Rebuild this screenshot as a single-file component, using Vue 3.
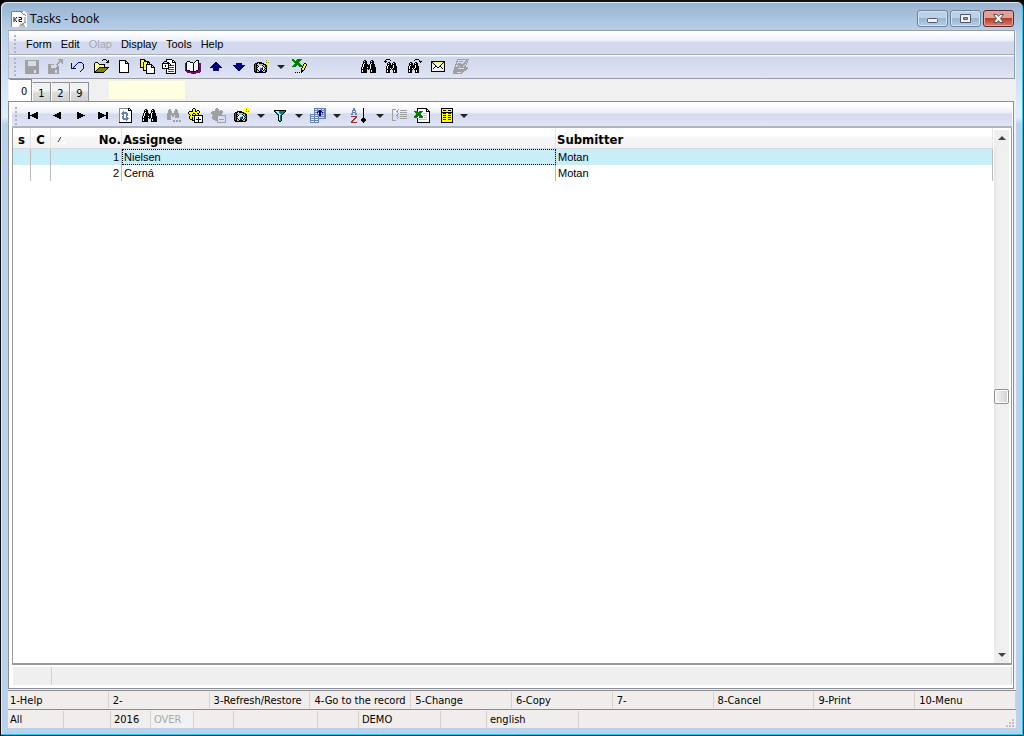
<script setup>
import { ref, h } from 'vue'

const palette = {
  K: '#000000', N: '#000080', G: '#a0a0a0', W: '#ffffff', Y: '#ffff00', O: '#808000',
  R: '#e00000', P: '#800080', T: '#008080', E: '#008000', L: '#c0c0c0', B: '#0000ff',
  C: '#a5e5e5', D: '#505050', S: '#6680b8', M: '#a03030', A: '#f7f77a', V: '#dbe4f4', F: '#7f947f'
}

const binoculars = [
  '', '...KK.....KK', '..KWKK...KWKK', '..KKKK...KKKK', '..KWKK...KWKK', '.KWKKKK.KWKKKK', '.KWKKKKKKWKKKK',
  '.KWKKKKKKWKKKK', 'KWKKKKWKKWKKKKK', 'KWKKKKKKKWKKKKK', 'KKKKKK.K.KKKKKK', 'KWKKKK...KWKKKK', 'KWKKKK...KWKKKK', 'KKKKKK...KKKKKK'
]
const icons = {
  save: ['', '.GGGGGGGGGGGGGG', '.GGG........GGG', '.GGG........GGG', '.GGG........GGG', '.GGG........GGG', '.GGG........GGG', '.GGGGGGGGGGGGGG',
    '.GGGGGGGGGGGGGG', '.GGGGGGGGGGGGGG', '.GGGGGGGGGGGGGG', '.GGGGGGGGG..GGG', '.GGGGGGGGG..GGG', '.GGGGGGGGG..GGG', '.GGGGGGGGGGGGGG'],
  export: ['...........GGGGG', '............GGGG', '............GGGG', '...........GG.GG', '..........GG...G', '.GGGGGG..GG', '.GGG......G', '.GGG......GG', '.GGG.....GGG', '.GGGGGGGGGGG',
    '.GGGGGGGGGGG', '.GGGGGGG..GG', '.GGGGGGG..GG', '.GGGGGGG..GG', '.GGGGGGGGGGG'],
  undo: ['', '', '', '........NNNN', '.N.....N....N', '.N....N......N', '.N...N.......N', '.N..N........N', '.N.N.........N', '.NNNNN.......N', '............N', '...........N', '..........N'],
  open: ['..........KKK', '.........K...K.K', '..............KK', '..KKK........KKK', '.KAWAK', '.KWAWAKKKKKK', '.KAWAWAWAWAK', '.KWAWAWAWAWK', '.KAWAWKKKKKKKKKK', '.KWAWKOOOOOOOOK', '.KAWKOOOOOOOOK', '.KWKOOOOOOOOK', '.KKOOOOOOOOK', '.KKKKKKKKKK'],
  page: ['', '...KKKKKKK', '...KWWWWWKK', '...KWWWWWKWK', '...KWWWWWKKKK', '...KWWWWWWWWK', '...KWWWWWWWWK', '...KWWWWWWWWK', '...KWWWWWWWWK', '...KWWWWWWWWK', '...KWWWWWWWWK', '...KWWWWWWWWK', '...KWWWWWWWWK', '...KKKKKKKKKK'],
  copy: ['.KKKKK', '.KAYAKK', '.KYAYKKKKK', '.KAYKAYAKKK', '.KYAKYAYKAK', '.KAYKAYKKKKKK', '.KYAKYAKWWWWKK', '.KAYKAYKWWWWKWK', '.KKKKYAKWWWWKKKK', '....KAYKWWWWWWWK', '....KYAKWWWWWWWK', '....KKKKWWWWWWWK', '.......KWWWWWWWK', '.......KWWWWWWWK', '.......KKKKKKKKK'],
  locked: ['....KKKKKK', '....KWWWWWKK', '..KKKWWWWWKWK', '.K...KKWWWKKKK', 'KKKKKKKKWWWWWK', 'KWWWWWKWKWWWWK', 'KWWKWWKRKRRRWK', 'KWWKWWKWWWWWWK', 'KWWWWWKRRRRRWK', 'KKKKKKKWWWWWWK', '....KWRRRRRRWK', '....KWWWWWWWWK', '....KWRRRRRRWK', '....KWWWWWWWWK', '....KKKKKKKKKK'],
  book: ['', '...........KKK', '..KKK.....KWWK', '.KWWWKKK.KWWWK', 'PKWAWWWWKWWWWKPP', 'PKWWAWWWKWAWWKPP', 'PKWAWWWWKWWAWKPP', 'PKWWAWWWKWAWWKPP', 'PKWAWWWWKWWAWKPP', 'PKWWAWWWKWAWWKPP', 'PKWWWWWWKWWWWKPP', 'PPKKKWWWKWWKKPPP', '.PPPPKKKKKKPPPPP', '..PPPPPPPPPPPPP', '......PPKPP'],
  up: ['', '', '', '.......NN', '......NNNN', '.....NNNNNN', '....NNNNNNNN', '...NNNNNNNNNN', '..NNNNNNNNNNNN', '.....NNNNNN', '.....NNNNNN', '.....NNNNNN'],
  down: ['', '', '', '', '.....NNNNNN', '.....NNNNNN', '..NNNNNNNNNNNN', '...NNNNNNNNNN', '....NNNNNNNN', '.....NNNNNN', '......NNNN', '.......NN'],
  camera: ['..........Y.Y.Y', '...........YOY', '.........YYYYYYY', '...KKKKK...YOYO', '.KKK.KKKKKYY.YY', 'KTKLLLLLLKKKY', 'KTKKLLLLKLLKK', 'KTKLKWWWWKLKK', 'KTKKWWCCTWKLK', 'KTKLWCTTNWLKK', 'KTKKWCTTNWKLK', 'KTKLKWNNWKLKK', 'KKKLLKKKKLLKK', '.KKKKKKKKKKK'],
  sheetPen: ['EE...EEEEE', 'EEE.EEEEE', '.EEEEEEE', '..EEEEE', '...EEEEE....KK', '..EEEEEEE..KYYK', '.EEEE.EEEE.KYYK', 'EEEE...EEEKYYK', '..........KYYK', '.........KYYK', '.........KYYK', '.........KKK', '.........KK', '...K.K.K.K'],
  binoculars,
  findBack: ['..KKKK', '.K....K', 'KKK', '.K..KK...KK', '...KWKK.KWKK', '...KKKK.KKKK', '...KWKKKKWKK', '..KWKKKKKWKKK', '..KWKKKKKWKKK', '..KWKKWKWKKKK', '..KKKKK.KKKKK', '..KWKK...KWKK', '..KWKK...KWKK', '..KKKK...KKKK'],
  findNext: ['........KKKK', '.......K....K', '............KKK', '...KK...KK...K', '..KWKK.KWKK', '..KKKK.KKKK', '..KWKKKKWKK', '.KWKKKKKWKKK', '.KWKKKKKWKKK', '.KWKKWKWKKKK', '.KKKKK.KKKKK', '.KWKK...KWKK', '.KWKK...KWKK', '.KKKK...KKKK'],
  mail: ['', '', '.KKKKKKKKKKKKKK', '.KKAAAAAAAAAAKK', '.KAKAWAWAWAWKAK', '.KWAKAWAWAWKAWK', '.KAWAKAWAWKAWAK', '.KWAWKKAWKKWAWK', '.KAWKAWKKAWKWAK', '.KWKWAWAWAWAKWK', '.KAWAWAWAWAWAWK', '.KWAWAWAWAWAWAK', '.KKKKKKKKKKKKKK'],
  edit: ['....GGGGGGGGGGGG', '....G........GG', '...GG.GGGG..GGG', '...G.......GG.G', '...G.GGG..GGGG', '..GGGGGGGGGG.G', '..G..GGGGGG.G', '..G.GG.GGG.GG', '.GGGGGGGGGGGGGG', '.GGGG......GGGG', '.GGGGGGGGGGGGG', 'GGGGGGGGGGGGG', 'GGGGGGGGGGG', 'GGGG....GG', 'GGGGGGGGG'],
  first: ['', '', '', '', '.KK......KK', '.KK....KKKK', '.KK..KKKKKK', '.KKKKKKKKKK', '.KK..KKKKKK', '.KK....KKKK', '.KK......KK'],
  prev: ['', '', '', '', '.........KK', '.......KKKK', '.....KKKKKK', '...KKKKKKKK', '.....KKKKKK', '.......KKKK', '.........KK'],
  next: ['', '', '', '', '....KK', '....KKKK', '....KKKKKK', '....KKKKKKKK', '....KKKKKK', '....KKKK', '....KK'],
  last: ['', '', '', '', '..KK......KK', '..KKKK....KK', '..KKKKKK..KK', '..KKKKKKKKKK', '..KKKKKK..KK', '..KKKK....KK', '..KK......KK'],
  refresh: ['FFFFFFFFFKK', 'FWWWWWWWWKWK', 'FWWWWWWWWKKKK', 'FWWWSWWWWWWWK', 'FWWSSSSSWWWWK', 'FWSSSSSSSWWWK', 'FWWSSWWSSWWWK', 'FWWWSWWSSWWWK', 'FWWSSWWSWWWWK', 'FWWSSWWSSWWWK', 'FWWSSSSSSSWWK', 'FWWWSSSSSWWWK', 'FWWWWWWSWWWWK', 'FWWWWWWWWWWWK', 'KKKKKKKKKKKKK'],
  findMore: ['', '....GG....GG', '...GGG....GGG', '...GGGG..GGGG', '...GGGG..GGGG', '..GGGGGGGGGGGG', '..GGGGGGGGGGGG', '..GGGG.GG.GGGG', '..GGGG.GG.GGGG', '..GGGG....GGGG', '..GGGG', '..GGGG..........', '........GG.GG.GG', '........GG.GG.GG'],
  addMark: ['.....KK', '....KYYK', '....KYYK.KK', '.KKKKYYKKYYK', 'KYYYYYYYYYYK', 'KYYYYKKYYKK', '.KYYKYYKYYK', '..KYKKKKKKKKKKK', '.KYYYYKWWWWWWWK', '.KYYKYKWWWKWWWK', '.KYYKYKWWWKWWWK', '..KKKYKWKKKKKWK', '....KKKWWWKWWWK', '......KWWWKWWWK', '......KKKKKKKKK'],
  removeMark: ['.....GG', '....GGGG', '....GGGG.GG', '.GGGGGGGGGGG', 'GGGGGGGGGGGG', 'GGGGGGGGGGG', '.GGGGGGGGGG', '..GGGGGGGGGGGGG', '.GGGGGG.......G', '.GGGGGG.......G', '.GGGGGG.......G', '..GGGGG.GGGGG.G', '....GGG.......G', '......G.......G', '......GGGGGGGGG'],
  filter: ['', '', '..KKKKKKKKKKKK', '..KTWCCTTTTTTK', '...KTWCTTTTTK', '....KTWCTTTK', '.....KTWCTK', '......KWTK', '......KWTK', '......KWTK', '......KWTK', '......KWTK', '......KTTK', '.......KK'],
  cards: ['....SSSSSSSSSSSS', '....SVVSVVVSVVSS', '....SSSSSNNSSSSS', '....SVVSNNNNVVSS', '....SSSNSNNSNSSS', '....SVVSVNNVSVSS', 'SSSSSSSSSNNSSSSS', 'SVVVSVVVSNNVVVSS', 'SSSSSSSSSSSSSSSS', 'SWWWSWWWSVVVVVSS', 'SSSSSSSSSSSSSSSS', 'SWWWSWWWS', 'SSSSSSSSS', 'SWWWSWWWS', 'SSSSSSSSS'],
  sort: ['...SS........K', '...SS........K', '..SSSS.......K', '..S..S.......K', '..SSSS.......K', '.SS..SS......K', '.SS..SS......K', '.............K', '.MMMMMM......K', '.....MM......K', '....MM......KKK', '...MM......KKKKK', '..MM.......KKKKK', '.MM.........KKK', '.MMMMMM......K'],
  tree: ['', '.GGGG..G', '.G....G..GGGGGGG', '.G...GG', '.G....G..GGGGGGG', '.G.....G', '.G....G..GGGGGGG', '.G...GG', '.G....G..GGGGGGG', '.G.....G', '.G....G..GGGGGGG', '.G', '.GGGG'],
  excel: ['...KKKKKKKKKK', '...KWWWWWWWWKK', '...KWWWWWWWWKWK', 'EEEEWEEEEWWWKKKK', '.EEEEEEEWWWWWWWK', '.LEEEEEWWLLLLWWK', '..EEEEEWWWWWWWWK', '.EEEEEEEWLLLLWWK', 'EEEEWEEEEWWWWWWK', 'EEEWWEEEEWLLLWWK', '...KWWWWWWWWWWWK', '...KWLLLLLLLLWWK', '...KWWWWWWWWWWWK', '...KWWWWWWWWWWWK', '...KKKKKKKKKKKKK'],
  columns: ['....KKKKKKKKKKKK', '....KYYYYYYYYYYK', '....KYKKKYYKKKYK', '....KYYYYYYYYYYK', '....KKKKKKKKKKKK', '....KYBBBYYBBBYK', '....KYYYYYYYYYYK', '....KYBBBYYBBBYK', '....KYYYYYYYYYYK', '....KYBBBYYBBBYK', '....KYYYYYYYYYYK', '....KYBBBYYBBBYK', '....KYYYYYYYYYYK', '....KYYYYYYYYYYK', '....KKKKKKKKKKKK']
}

function toPaths(rows) {
  const byColour = {}
  rows.forEach((row, y) => {
    for (let x = 0; x < row.length;) {
      const c = row[x]
      let end = x + 1
      while (end < row.length && row[end] === c) end++
      if (palette[c]) byColour[c] = (byColour[c] || '') + `M${x} ${y}h${end - x}v1h-${end - x}z`
      x = end
    }
  })
  return Object.entries(byColour).map(([c, d]) => h('path', { d, fill: palette[c] }))
}
const PixelIcon = (props) =>
  h('svg', { width: 16, height: 16, viewBox: '0 0 16 16', 'shape-rendering': 'crispEdges', 'aria-hidden': 'true' }, toPaths(icons[props.name]))
PixelIcon.props = ['name']

const menus = ['Form', 'Edit', 'Olap', 'Display', 'Tools', 'Help']
const mainTools = [
  ['save', 'Save'], ['export', 'Save and close'], ['undo', 'Undo'], ['open', 'Open'], ['page', 'New'], ['copy', 'Copy'], ['locked', 'Locked copy'],
  ['book', 'Book'], ['up', 'Previous'], ['down', 'Next'], ['camera', 'Snapshot'], ['drop', 'Snapshot options'], ['sheetPen', 'Edit sheet'], ['gap'],
  ['binoculars', 'Find'], ['findBack', 'Find previous'], ['findNext', 'Find next'], ['mail', 'Mail'], ['edit', 'Notes']
]
const gridTools = [
  ['first', 'First record'], ['prev', 'Previous record'], ['next', 'Next record'], ['last', 'Last record'], ['refresh', 'Refresh'], ['binoculars', 'Find'],
  ['findMore', 'Find more'], ['addMark', 'Add mark'], ['removeMark', 'Remove mark'], ['camera', 'Snapshot'], ['drop', 'Snapshot options'],
  ['filter', 'Filter'], ['drop', 'Filter options'], ['cards', 'Views'], ['drop', 'View options'], ['sort', 'Sort', 'wide'], ['drop', 'Sort options'],
  ['tree', 'Tree'], ['excel', 'Export to sheet'], ['columns', 'Columns'], ['drop', 'Column options']
]
const tabs = ['0', '1', '2', '9']
const active = ref('0')
const search = ref('')
const rows = [
  { no: 1, assignee: 'Nielsen', submitter: 'Motan' },
  { no: 2, assignee: 'Cerná', submitter: 'Motan' }
]
const selected = ref(1)
const keys = ['1-Help', '2-', '3-Refresh/Restore', '4-Go to the record', '5-Change', '6-Copy', '7-', '8-Cancel', '9-Print', '10-Menu']
const status = [
  ['All', 56], ['', 47], ['2016', 40], ['OVER', 43], ['', 40], ['', 84], ['', 41], ['DEMO', 82], ['', 46], ['english', 92]
]
</script>

<template>
  <div class="window">
    <header class="title">
      <svg class="logo" width="16" height="16" viewBox="0 0 16 16" aria-hidden="true">
        <path d="M0 0h13l3 2v14H0z" fill="#fff" />
        <path d="M.5 16V.5H12M10 1l3 3M13 3l2 2M14 6v6M11 13l4-2M8 15h6M9 13l4 1" fill="none" stroke="#808080" />
        <path d="M3 6v5M6 6L4 8.500l2 2.500M7.500 6.500h3v2H8v2h3" fill="none" stroke="#111" />
      </svg>
      <h1>Tasks - book</h1>
      <button class="cap" aria-label="Minimize">
        <svg width="29" height="15" viewBox="0 0 29 15"><rect x="9.500" y="7.500" width="10" height="4" rx="1" fill="#f4f4f4" stroke="#535666" /></svg>
      </button>
      <button class="cap" aria-label="Maximize">
        <svg width="29" height="15" viewBox="0 0 29 15"><path d="M9.500 3.500h10v8h-10zM12.500 6.500v2h4v-2z" fill="#f4f4f4" fill-rule="evenodd" stroke="#535666" /></svg>
      </button>
      <button class="cap close" aria-label="Close">
        <svg width="29" height="15" viewBox="0 0 29 15"><path d="M9.500 3.500h3.500l1.500 2 1.500-2h3.500l-3 4 3 4H16l-1.500-2-1.500 2H9.500l3-4z" fill="#f4f4f4" stroke="#535666" /></svg>
      </button>
    </header>

    <main class="client">
      <div class="bars">
        <nav class="menubar">
          <span class="grip"></span>
          <button v-for="m in menus" :key="m" :disabled="m === 'Olap'">{{ m }}</button>
        </nav>
        <div class="toolbar main-tools">
          <span class="grip"></span>
          <template v-for="(t, i) in mainTools" :key="i">
            <span v-if="t[0] === 'gap'" class="gap"></span>
            <button v-else-if="t[0] === 'drop'" class="drop" :aria-label="t[1]"></button>
            <button v-else class="tool" :aria-label="t[1]"><PixelIcon :name="t[0]" /></button>
          </template>
        </div>
      </div>

      <div class="tabs">
        <button v-for="t in tabs" :key="t" class="tab" :class="{ on: t === active }" @click="active = t">{{ t }}</button>
        <input v-model="search" class="search" type="text" aria-label="Search">
      </div>

      <section class="panel">
        <div class="toolbar grid-tools">
          <span class="grip"></span>
          <template v-for="(t, i) in gridTools" :key="i">
            <button v-if="t[0] === 'drop'" class="drop" :aria-label="t[1]"></button>
            <button v-else class="tool" :class="t[2]" :aria-label="t[1]"><PixelIcon :name="t[0]" /></button>
          </template>
        </div>
        <div class="grid">
          <div class="sheet">
            <table>
              <colgroup><col class="c-s"><col class="c-c"><col class="c-no"><col class="c-as"><col></colgroup>
              <thead>
                <tr>
                  <th>s</th>
                  <th>C</th>
                  <th>
                    <div class="no-head">
                      <svg width="12" height="8" viewBox="0 0 12 8" aria-hidden="true"><path d="M3 6l3-5" stroke="#333" /><path d="M6.500 1l4 6.500h-7" fill="none" stroke="#fff" /></svg>
                      <span>No.</span>
                    </div>
                  </th>
                  <th class="left">Assignee</th>
                  <th class="left">Submitter</th>
                </tr>
              </thead>
              <tbody>
                <tr v-for="r in rows" :key="r.no" :class="{ sel: r.no === selected }" @click="selected = r.no">
                  <td></td>
                  <td></td>
                  <td class="num">{{ r.no }}</td>
                  <td class="name">{{ r.assignee }}</td>
                  <td>{{ r.submitter }}</td>
                </tr>
              </tbody>
            </table>
          </div>
          <div class="scroll">
            <button class="arrow" aria-label="Scroll up"><i></i></button>
            <div class="track"><span class="thumb"></span></div>
            <button class="arrow dn" aria-label="Scroll down"><i></i></button>
          </div>
        </div>
        <div class="strip"><span></span></div>
      </section>

      <div class="keys">
        <button v-for="k in keys" :key="k">{{ k }}</button>
      </div>
      <footer class="status">
        <span v-for="(s, i) in status" :key="i" :class="{ off: s[0] === 'OVER' }" :style="{ width: s[1] + 'px' }">{{ s[0] }}</span>
        <svg class="size" width="10" height="10" viewBox="0 0 10 10" aria-hidden="true"><path d="M7 1h2v2H7zM4 4h2v2H4zM7 4h2v2H7zM1 7h2v2H1zM4 7h2v2H4zM7 7h2v2H7z" fill="#c4c0c0" /></svg>
      </footer>
    </main>
  </div>
</template>

<style>
html, body { margin: 0; background: #000; }
</style>

<style scoped>
* { box-sizing: border-box; }
button { border: 0; padding: 0; margin: 0; background: none; font: inherit; color: inherit; }
.window {
  height: 100vh; display: flex; flex-direction: column; overflow: hidden;
  padding: 0 6px 7px 6px; border: 1px solid #111; border-width: 2px 1px 1px;
  border-radius: 7px 7px 0 0;
  background: linear-gradient(#98b3d1 0, #b9d1ea 30px, #e0effb 115px, #b9d1ea 122px);
  box-shadow: inset -1px -1px #22cce8, inset 1px 1px #dcecf8;
  font: 11px/14px "DejaVu Sans Condensed", "DejaVu Sans", sans-serif; color: #000;
}
.title { flex: none; height: 28px; display: flex; align-items: center; padding: 5px 0 0 4px; }
.title h1 { flex: 1; margin: 0 0 0 3px; font: 12px/16px "Open Sans", "Noto Sans", sans-serif; }
.logo { flex: none; }
.cap {
  width: 31px; height: 17px; margin: 0 0 0 2px; display: flex; align-items: center; justify-content: center;
  border: 1px solid #6c819b; border-radius: 3px; box-shadow: inset 0 0 0 1px #d3e3f2;
  background: linear-gradient(#bdd2e7 46%, #98b5d1 50%, #b4cfe8);
}
.cap.close { margin-right: 3px; border-color: #5b2631; box-shadow: inset 0 0 0 1px #e3a698; background: linear-gradient(#e0a194 46%, #b83c26 50%, #d68168); }
.client { flex: 1; min-height: 0; display: flex; flex-direction: column; background: #f0f0f0; margin: 0 1px; }
.bars { flex: none; border: 1px solid #999ca5; border-left-color: #b6bac6; margin-right: 1px; }
.menubar {
  height: 24px; display: flex; align-items: center; padding: 3px 0 0 5px; border-bottom: 1px solid #a9abb5;
  background: linear-gradient(#fff 2px, #e9eef8 10px, #d4daee 11px);
  font-family: "Liberation Sans", Arial, sans-serif;
}
.menubar button { margin-right: 9px; }
.menubar .grip { margin-right: 10px; }
.menubar button:disabled { color: #a5a9b5; }
.grip { flex: none; width: 2px; height: 18px; background: repeating-linear-gradient(#b3b7c5 0 2px, transparent 2px 4px); }
.toolbar { display: flex; align-items: center; }
.main-tools { height: 23px; padding-left: 5px; background: linear-gradient(#fff 1px, #cfd7eb 2px, #dfe4f5); }
.main-tools .grip { margin-right: 8px; }
.tool { flex: none; width: 23px; height: 20px; display: flex; align-items: center; justify-content: flex-start; }
.tool.wide { width: 28px; padding-left: 2px; }
.drop { flex: none; width: 15px; height: 20px; display: flex; align-items: center; }
.drop::before { content: ""; border: 4px solid transparent; border-top-color: #222; border-bottom: 0; }
.gap { width: 46px; }
.tabs { flex: none; height: 22px; display: flex; align-items: flex-end; padding-left: 1px; }
.tab {
  width: 19px; height: 19px; padding-top: 3px; border: 1px solid #8b8f98; border-left-color: #fff; border-bottom: 0;
  background: linear-gradient(#f2f2f2 45%, #ddd 50%, #d2d2d2); font: 11px/14px "DejaVu Sans Condensed", sans-serif;
}
.tab.on { width: 23px; height: 22px; padding: 2px 0 0 11px; text-align: left; background: #fff; border-color: #8b8f98 #8b8f98 #fff #fff; }
.search { width: 78px; height: 20px; margin: 0 0 1px 19px; padding: 0 3px; border: 1px solid #f2f2e4; background: #ffffe1; font: inherit; outline: 0; }
.panel {
  flex: 1; min-height: 0; display: flex; flex-direction: column; margin-right: 2px; padding: 0 1px 3px 3px;
  border: 1px solid #8b8f98; background: #fff;
}
.grid-tools { flex: none; height: 26px; padding: 4px 0 0 3px; border-bottom: 2px solid #b0b4c0; background: linear-gradient(#fff 3px, #e9eef8 11px, #d4daee 12px, #e0e5f5); }
.grid-tools .grip { margin-right: 10px; }
.grid { flex: 1; min-height: 0; display: flex; border: 1px solid #9a9a9e; border-width: 0 1px 2px 1px; }
.sheet { flex: 1; min-width: 0; }
table { width: 100%; table-layout: fixed; border-collapse: separate; border-spacing: 0; }
.c-s { width: 18px; }
.c-c { width: 20px; }
.c-no { width: 71px; }
.c-as { width: 434px; }
th {
  height: 21px; padding: 3px 0 0; border-right: 1px solid #e4e4e4; border-bottom: 1px solid #d9d9d9;
  background: linear-gradient(#fff 8px, #f5f6f7 9px, #f2f3f4); font: bold 13px/16px "DejaVu Sans Condensed", sans-serif;
}
th.left { text-align: left; padding-left: 1px; }
.no-head { display: flex; align-items: center; justify-content: space-between; padding-left: 4px; }
td { height: 16px; padding: 0 2px; border-right: 1px solid #bdbdbd; font: 11px/16px "Liberation Sans", Arial, sans-serif; }
td.num { text-align: right; }
.sel td { background: #c9eefa; }
.sel td.name { outline: 1px dotted #000; outline-offset: -1px; }
.scroll { flex: none; width: 18px; display: flex; flex-direction: column; padding: 2px 2px 0 1px; background: #fff; }
.arrow { height: 16px; display: flex; align-items: center; justify-content: center; background: #efefef; }
.arrow i { border: 4px solid transparent; border-bottom-color: #444; border-top: 0; }
.arrow.dn i { border: 4px solid transparent; border-top-color: #444; border-bottom: 0; }
.track { flex: 1; display: flex; align-items: center; background: linear-gradient(90deg, #e6e6e6, #f0f0f0 4px); }
.thumb { width: 15px; height: 15px; border: 1px solid #929292; border-radius: 2px; background: linear-gradient(90deg, #f5f5f5, #d0d0d3); box-shadow: inset 0 0 0 1px #fff; }
.strip { flex: none; height: 18px; margin: 2px 0 0 1px; display: flex; background: #efefef; border-right: 1px solid #d0d0d0; }
.strip span { width: 39px; border-right: 1px solid #d0d0d0; }
.keys { flex: none; height: 20px; margin-top: 1px; display: grid; grid-template-columns: repeat(10, 1fr); border: 1px solid #8b8b8f; border-width: 1px 0; background: #f0edec; }
.keys button { margin: 1px 0; padding: 2px 0 0 4px; text-align: left; white-space: nowrap; border-right: 1px solid #d4d1d0; }
.keys button:first-child { padding-left: 2px; }
.status { flex: none; height: 18px; display: flex; align-items: stretch; padding-top: 1px; background: #f0edec; }
.status span { flex: none; padding: 2px 0 0 3px; border-right: 1px solid #d4d1d0; }
.status span:first-child { padding-left: 2px; }
.status .off { color: #a9a9a9; background: #f2f2f2; }
.size { margin: auto 1px 0 auto; }
</style>
